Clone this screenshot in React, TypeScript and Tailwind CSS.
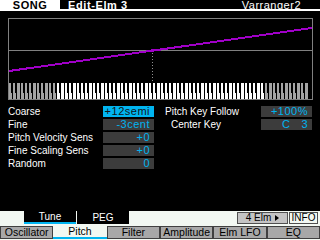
import React from 'react'

type Key = { x: number; gray: boolean }

function buildKeys() {
  const whites: Key[] = []
  const blacks: Key[] = []
  let wi = 0
  for (let n = 0; n < 128; n++) {
    const pc = n % 12
    const gray = n < 21 || n > 108
    if ([1, 3, 6, 8, 10].includes(pc)) {
      blacks.push({ x: (wi - 1) * 4 + 2, gray })
    } else {
      whites.push({ x: wi * 4, gray })
      wi++
    }
  }
  return { whites, blacks }
}

function Graph() {
  const { whites, blacks } = buildKeys()
  return (
    <div className="ml-[8px] mt-[7px] h-[82px] w-[305px] border border-[#808080]">
      <svg width="303" height="80" viewBox="0 0 303 80" shapeRendering="crispEdges">
        <line x1="0" y1="31.5" x2="303" y2="31.5" stroke="#808080" strokeWidth="1" />
        <line x1="0" y1="52" x2="303" y2="9" stroke="#a000c8" strokeWidth="2" />
        <rect x="142" y="30" width="3" height="3" fill="#a000c8" />
        <line x1="143.5" y1="34" x2="143.5" y2="64" stroke="#909090" strokeWidth="1" strokeDasharray="1 2" />
        {/* keyboard */}
        <rect x="0" y="64" width="300" height="16" fill="#000" />
        {whites.map((k, i) => (
          <rect key={'w' + i} x={k.x} y="64" width="3" height="16" fill={k.gray ? '#a4a4a4' : '#ffffff'} />
        ))}
        {blacks.map((k, i) => (
          <rect key={'b' + i} x={k.x} y="64" width="2" height="10" fill="#000" />
        ))}
      </svg>
    </div>
  )
}

function Value({ value, active }: { value: React.ReactNode; active?: boolean }) {
  return (
    <div
      className={`flex h-[11px] w-[51px] items-center justify-end overflow-visible whitespace-nowrap pr-[4px] text-[11px] leading-[11px] tracking-[0.5px] ${
        active ? 'bg-[#00b4f0] text-[#101418]' : 'bg-[#3c3c3c] text-[#00b4f0]'
      }`}
    >
      {value}
    </div>
  )
}

function Row({ label, value, active, indent }: { label: string; value: React.ReactNode; active?: boolean; indent?: boolean }) {
  return (
    <div className="flex h-[11px] items-center">
      <div className={`flex-1 text-[10px] leading-[11px] text-white ${indent ? 'pl-[6px]' : ''}`}>{label}</div>
      <Value value={value} active={active} />
    </div>
  )
}

export default function App() {
  const tabs = ['Oscillator', 'Pitch', 'Filter', 'Amplitude', 'Elm LFO', 'EQ']

  return (
    <div className="flex h-[240px] w-[320px] flex-col overflow-hidden bg-black font-['Liberation_Sans',Arial,sans-serif] text-white">
      {/* Header */}
      <div className="flex h-[11px]">
        <div className="h-[11px] w-[60px] bg-white text-center text-[11px] font-bold leading-[10px] tracking-[0.5px] text-black">SONG</div>
        <div className="flex h-[11px] flex-1 justify-between border-b-2 border-white">
          <span className="pl-[8px] text-[11px] font-bold leading-[10px] tracking-[0.6px]">Edit-Elm 3</span>
          <span className="pr-[19px] text-[11px] leading-[10px] tracking-[0.5px]">Varranger2</span>
        </div>
      </div>

      <Graph />

      {/* Parameters */}
      <div className="mt-[6px] flex gap-[11px] px-[8px]">
        <div className="flex w-[146px] flex-col gap-[2px]">
          <Row label="Coarse" value="+12semi" active />
          <Row label="Fine" value="-3cent" />
          <Row label="Pitch Velocity Sens" value="+0" />
          <Row label="Fine Scaling Sens" value="+0" />
          <Row label="Random" value="0" />
        </div>
        <div className="flex w-[147px] flex-col gap-[2px]">
          <Row label="Pitch Key Follow" value="+100%" />
          <Row
            label="Center Key"
            indent
            value={
              <span className="flex gap-[11px]">
                <span>C</span>
                <span>3</span>
              </span>
            }
          />
        </div>
      </div>

      {/* Bottom band */}
      <div className="mt-auto flex h-[29px] flex-col bg-[#f2f8f2]">
        <div className="flex h-[13px] items-stretch">
          <div className="ml-[24px] w-[52px] border-b-2 border-[#00b4f0] bg-black text-center text-[10px] leading-[11px] text-white">
            Tune
          </div>
          <div className="ml-[1px] w-[52px] bg-black text-center text-[10px] leading-[13px] text-white">PEG</div>
          <div className="ml-auto mt-[1px] flex h-[12px] w-[51px] items-center justify-center gap-[4px] border border-[#505050] bg-[#c4c4c4] text-[10px] leading-[10px] text-black">
            <span>4 Elm</span>
            <svg width="4" height="6" viewBox="0 0 4 6">
              <path d="M0 0 L4 3 L0 6 Z" fill="#000" />
            </svg>
          </div>
          <div className="ml-[1px] mr-[2px] mt-[1px] flex h-[12px] w-[29px] items-center justify-center border border-[#505050] text-[10px] leading-[10px] text-black">
            INFO
          </div>
        </div>
        <div className="mt-[2px] grid h-[13px] grid-cols-6">
          {tabs.map((t) => (
            <div
              key={t}
              className={`flex items-center justify-center whitespace-nowrap text-[10.5px] leading-[11px] text-black ${
                t === 'Pitch' ? 'border-b-2 border-[#00b4f0] bg-[#f2f8f2]' : 'border border-[#404040] bg-[#a8a8a8]'
              }`}
            >
              {t}
            </div>
          ))}
        </div>
      </div>
    </div>
  )
}
